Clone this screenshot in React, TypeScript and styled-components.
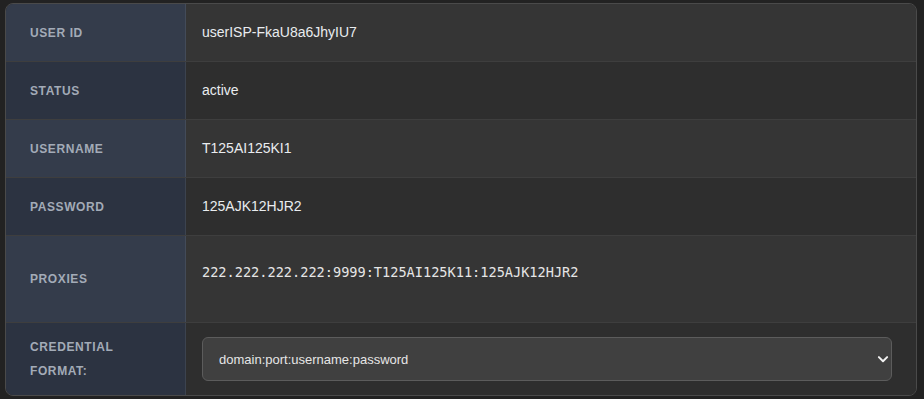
import React from "react";
import styled, { createGlobalStyle } from "styled-components";

const GlobalStyle = createGlobalStyle`
  html, body { background: #222222; }
  body {
    margin: 3px 7px 0 5px;
    font-family: "Liberation Sans", Arial, sans-serif;
  }
  * { box-sizing: border-box; }
`;

const Card = styled.div`
  border: 1px solid #4a4a4a;
  border-radius: 8px;
  overflow: hidden;
  background: #2e2e2e;
`;

const Row = styled.div<{ $odd: boolean; $last?: boolean }>`
  display: grid;
  grid-template-columns: 180px 1fr;
  border-bottom: ${(p) => (p.$last ? "none" : "1px solid rgba(255,255,255,0.08)")};
  --label-bg: ${(p) => (p.$odd ? "#343c4b" : "#2c3341")};
  --value-bg: ${(p) => (p.$odd ? "#353535" : "#2e2e2e")};
`;

const Label = styled.div`
  background: var(--label-bg);
  border-right: 1px solid rgba(255, 255, 255, 0.08);
  display: flex;
  align-items: center;
  padding: 0 24px;
  font-size: 12px;
  font-weight: 700;
  letter-spacing: 0.6px;
  line-height: 24px;
  text-transform: uppercase;
  color: #a3abb7;
`;

const Value = styled.div<{ $tight?: boolean }>`
  background: var(--value-bg);
  padding: ${(p) => (p.$tight ? "14px 24px 14px 16px" : "18px 16px")};
  font-size: 14px;
  line-height: 21px;
  color: #e9ecef;
`;

const Code = styled.pre`
  margin: 0 0 14px;
  padding: 8px 0;
  font-family: "DejaVu Sans Mono", "Liberation Mono", monospace;
  font-size: 13.6px;
  line-height: 20px;
  color: #e6e6e6;
`;

const SelectWrap = styled.div`
  position: relative;
`;

const Select = styled.select`
  appearance: none;
  -webkit-appearance: none;
  width: 100%;
  height: 44px;
  padding: 0 36px 0 16px;
  background: #404040;
  border: 1px solid #5c5c5c;
  border-radius: 6px;
  color: #e6e6e6;
  font-family: "Liberation Sans", Arial, sans-serif;
  font-size: 13px;
  outline: none;
`;

const Chevron = styled.svg`
  position: absolute;
  right: 3px;
  top: 50%;
  width: 12px;
  height: 12px;
  margin-top: -6px;
  pointer-events: none;
`;

const rows: { label: string; value: string }[] = [
  { label: "User ID", value: "userISP-FkaU8a6JhyIU7" },
  { label: "Status", value: "active" },
  { label: "Username", value: "T125AI125KI1" },
  { label: "Password", value: "125AJK12HJR2" },
];

export default function App() {
  return (
    <>
      <GlobalStyle />
      <Card>
        {rows.map((r, i) => (
          <Row key={r.label} $odd={i % 2 === 0}>
            <Label>{r.label}</Label>
            <Value>{r.value}</Value>
          </Row>
        ))}
        <Row $odd>
          <Label>Proxies</Label>
          <Value>
            <Code>222.222.222.222:9999:T125AI125K11:125AJK12HJR2</Code>
          </Value>
        </Row>
        <Row $odd={false} $last>
          <Label>Credential Format:</Label>
          <Value $tight>
            <SelectWrap>
              <Select defaultValue="dpup">
                <option value="dpup">domain:port:username:password</option>
                <option value="updp">username:password@domain:port</option>
              </Select>
              <Chevron viewBox="0 0 16 16" aria-hidden="true">
                <polyline
                  points="2.5 5.5 8 11 13.5 5.5"
                  fill="none"
                  stroke="#f2f2f2"
                  strokeWidth="2.6"
                  strokeLinecap="round"
                  strokeLinejoin="round"
                />
              </Chevron>
            </SelectWrap>
          </Value>
        </Row>
      </Card>
    </>
  );
}
